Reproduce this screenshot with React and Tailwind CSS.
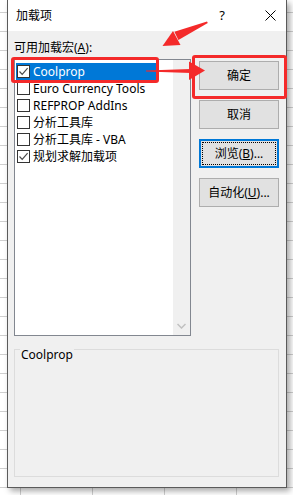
import React from "react";

const items = [
  { label: "Coolprop", checked: true, selected: true },
  { label: "Euro Currency Tools", checked: false },
  { label: "REFPROP AddIns", checked: false },
  { label: "分析工具库", checked: false },
  { label: "分析工具库 - VBA", checked: false },
  { label: "规划求解加载项", checked: true },
];

function CheckBox({ checked }) {
  return (
    <div className="w-[13px] h-[13px] border border-[#333333] bg-white flex items-center justify-center shrink-0">
      {checked && (
        <svg width="11" height="11" viewBox="0 0 11 11">
          <path d="M1.5 5.5 L4.2 8.3 L9.6 2.2" fill="none" stroke="#4a4a4a" strokeWidth="1.2" />
        </svg>
      )}
    </div>
  );
}

function Button({ children, focused }) {
  if (focused) {
    return (
      <div className="h-[29px] w-[80px] bg-[#e1e1e1] border-2 border-[#0078d7] p-[1px]">
        <div className="h-full w-full border border-dotted border-black flex items-center justify-center text-[12px] text-black">
          {children}
        </div>
      </div>
    );
  }
  return (
    <div className="h-[29px] w-[80px] bg-[#e1e1e1] border border-[#adadad] flex items-center justify-center text-[12px] text-black">
      {children}
    </div>
  );
}

export default function App() {
  return (
    <div className="relative w-[293px] h-[495px] overflow-hidden bg-white bg-[linear-gradient(to_bottom,#cfcfcf_1px,transparent_1px),linear-gradient(to_right,#cfcfcf_1px,transparent_1px)] bg-size-[72px_19px] bg-position-[20px_12px] font-['Noto_Sans','Noto_Sans_CJK_SC',sans-serif]">
      {/* dialog */}
      <div className="ml-[7px] w-[280px] h-[488px] border-x border-b border-[#5a5a5a] bg-[#f0f0f0] flex flex-col shadow-[3px_3px_6px_rgba(0,0,0,0.35)]">
        <div className="h-[31px] bg-white flex items-center pl-[8px] pr-[10px] text-[12px] text-black">
          <span>加载项</span>
          <span className="ml-auto mr-[40px] text-[13px]">?</span>
          <svg width="11" height="11" viewBox="0 0 11 11">
            <path d="M0.5 0.5 L10.5 10.5 M10.5 0.5 L0.5 10.5" stroke="#000" strokeWidth="1" />
          </svg>
        </div>

        <div className="flex-1 flex flex-col pt-[10px] px-[6px]">
          <div className="flex gap-[8px]">
            <div className="w-[177px]">
              <div className="h-[14px] leading-[14px] text-[12px] text-black">
                可用加载宏(<span className="underline">A</span>):
              </div>
              <div className="mt-[4px] h-[277px] border border-[#828790] bg-white flex">
                <div className="flex-1 pt-[3px] pl-[1px]">
                  {items.map((it) => (
                    <div
                      key={it.label}
                      className={`h-[17px] w-[141px] flex items-center gap-[3px] pl-[1px] text-[12px] ${
                        it.selected ? "bg-[#0078d7] text-white" : "text-black"
                      }`}
                    >
                      <CheckBox checked={it.checked} />
                      <span className="whitespace-nowrap">{it.label}</span>
                    </div>
                  ))}
                </div>
                <div className="w-[17px] bg-[#f0f0f0] flex flex-col items-center justify-end pb-[6px]">
                  <svg width="9" height="6" viewBox="0 0 9 6">
                    <path d="M0.5 1 L4.5 5 L8.5 1" fill="none" stroke="#c0c0c0" strokeWidth="1.5" />
                  </svg>
                </div>
              </div>
            </div>
            <div className="flex flex-col gap-[10px] pt-[20px]">
              <Button>确定</Button>
              <Button>取消</Button>
              <Button focused>浏览(<span className="underline">B</span>)...</Button>
              <Button>自动化(<span className="underline">U</span>)...</Button>
            </div>
          </div>

          <div className="mt-[13px] h-[128px] w-[265px] border border-[#dcdcdc]">
            <span className="relative -top-[9px] ml-[5px] px-[1px] bg-[#f0f0f0] text-[12px] text-black leading-[14px]">
              Coolprop
            </span>
          </div>
        </div>
      </div>

      {/* red annotations */}
      <div className="absolute left-[11px] top-[57px] w-[148px] h-[26px] border-[3px] border-[#f42a2a] rounded-[3px]" />
      <div className="absolute left-[192px] top-[55px] w-[95px] h-[44px] border-[3px] border-[#f42a2a] rounded-[3px]" />
      <svg className="absolute inset-0 pointer-events-none" width="293" height="495" viewBox="0 0 293 495">
        <polygon points="207,21.5 207.8,23 178.4,40 174.4,31.8" fill="#f42a2a" />
        <polygon points="162.5,46 173,31 180.5,45" fill="#f42a2a" />
        <polygon points="146,70.5 146,71.5 191,73 191,69" fill="#f42a2a" />
        <polygon points="189,61.5 205,70.5 189,80" fill="#f42a2a" />
      </svg>
    </div>
  );
}
